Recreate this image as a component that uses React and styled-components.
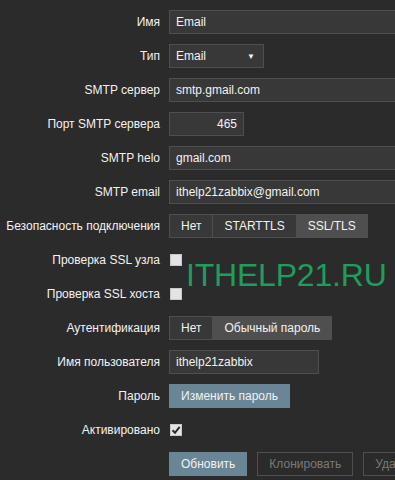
import React from "react";
import styled, { createGlobalStyle } from "styled-components";

const Global = createGlobalStyle`
  html, body {
    margin: 0;
    background: #2b2b2b;
    overflow: hidden;
  }
  body {
    font-family: "Liberation Sans", Arial, sans-serif;
    font-size: 12px;
    color: #f2f2f2;
  }
`;

function App() {
  return (
    <Page>
      <Global />
      <Form>
        <Label>Имя</Label>
        <Field>
          <TextInput $width="460px">Email</TextInput>
        </Field>

        <Label>Тип</Label>
        <Field>
          <Select>
            <span>Email</span>
            <Caret>▼</Caret>
          </Select>
        </Field>

        <Label>SMTP сервер</Label>
        <Field>
          <TextInput $width="460px">smtp.gmail.com</TextInput>
        </Field>

        <Label>Порт SMTP сервера</Label>
        <Field>
          <TextInput $width="75px" $right>
            465
          </TextInput>
        </Field>

        <Label>SMTP helo</Label>
        <Field>
          <TextInput $width="460px">gmail.com</TextInput>
        </Field>

        <Label>SMTP email</Label>
        <Field>
          <TextInput $width="460px">ithelp21zabbix@gmail.com</TextInput>
        </Field>

        <Label>Безопасность подключения</Label>
        <Field>
          <Segments>
            <Segment>Нет</Segment>
            <Segment>STARTTLS</Segment>
            <Segment $active>SSL/TLS</Segment>
          </Segments>
        </Field>

        <Label>Проверка SSL узла</Label>
        <Field>
          <Checkbox />
        </Field>

        <Label>Проверка SSL хоста</Label>
        <Field>
          <Checkbox />
        </Field>

        <Label>Аутентификация</Label>
        <Field>
          <Segments>
            <Segment>Нет</Segment>
            <Segment $active>Обычный пароль</Segment>
          </Segments>
        </Field>

        <Label>Имя пользователя</Label>
        <Field>
          <TextInput $width="150px">ithelp21zabbix</TextInput>
        </Field>

        <Label>Пароль</Label>
        <Field>
          <Button>Изменить пароль</Button>
        </Field>

        <Label>Активировано</Label>
        <Field>
          <Checkbox>
            <svg width="10" height="10" viewBox="0 0 10 10">
              <path
                d="M1.5 5.2 L4 7.8 L8.6 1.8"
                fill="none"
                stroke="#2b2b2b"
                strokeWidth="2"
              />
            </svg>
          </Checkbox>
        </Field>

        <span />
        <Actions>
          <Button>Обновить</Button>
          <GhostButton>Клонировать</GhostButton>
          <GhostButton>Удалить</GhostButton>
        </Actions>
      </Form>
      <Watermark>ITHELP21.RU</Watermark>
    </Page>
  );
}

export default App;

const Page = styled.div`
  position: relative;
  width: 395px;
  height: 480px;
  padding-top: 10px;
  box-sizing: border-box;
`;

const Form = styled.div`
  display: grid;
  grid-template-columns: 160px auto;
  column-gap: 9px;
  row-gap: 10px;
  grid-auto-rows: 24px;
`;

const Label = styled.div`
  display: flex;
  align-items: center;
  justify-content: flex-end;
  white-space: nowrap;
  color: #f2f2f2;
`;

const Field = styled.div`
  display: flex;
  align-items: center;
  min-width: 0;
`;

const TextInput = styled.div`
  box-sizing: border-box;
  flex: none;
  width: ${(p) => p.$width};
  height: 24px;
  line-height: 22px;
  padding: 0 6px;
  background: #383838;
  border: 1px solid #4f4f4f;
  text-align: ${(p) => (p.$right ? "right" : "left")};
  white-space: nowrap;
`;

const Select = styled.div`
  box-sizing: border-box;
  width: 95px;
  height: 24px;
  display: flex;
  align-items: center;
  justify-content: space-between;
  padding: 0 8px 0 6px;
  background: #383838;
  border: 1px solid #4f4f4f;
`;

const Caret = styled.span`
  font-size: 8px;
  color: #f2f2f2;
`;

const Segments = styled.div`
  display: flex;
  height: 24px;
  box-sizing: border-box;
  border: 1px solid #4f4f4f;
`;

const Segment = styled.div`
  display: flex;
  align-items: center;
  padding: 0 11px;
  background: ${(p) => (p.$active ? "#4f4f4f" : "#383838")};
  border-left: 1px solid #4f4f4f;
  &:first-child {
    border-left: none;
  }
`;

const Checkbox = styled.div`
  box-sizing: border-box;
  width: 12px;
  height: 12px;
  margin-left: 1px;
  background: #e4e4e4;
  border: 1px solid #c8c8c8;
  display: flex;
  align-items: center;
  justify-content: center;
`;

const Button = styled.div`
  box-sizing: border-box;
  height: 24px;
  display: flex;
  align-items: center;
  padding: 0 12px;
  background: #6a8595;
  color: #f2f2f2;
  white-space: nowrap;
`;

const GhostButton = styled(Button)`
  padding: 0 11px;
  background: transparent;
  border: 1px solid #4f4f4f;
  color: #7a7a7a;
`;

const Actions = styled.div`
  display: flex;
  gap: 10px;
`;

const Watermark = styled.div`
  position: absolute;
  left: 186px;
  top: 259px;
  font-size: 32px;
  line-height: 32px;
  color: #1f9d5c;
  letter-spacing: -0.2px;
`;
